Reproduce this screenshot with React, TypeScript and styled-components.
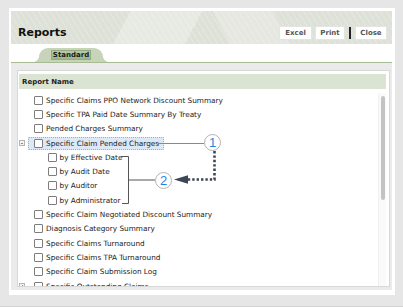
import React from 'react';
import styled, { createGlobalStyle } from 'styled-components';

const GlobalStyle = createGlobalStyle`
  html, body {
    margin: 0;
    padding: 0;
    background: #e6e6e6;
  }
  * {
    box-sizing: border-box;
  }
`;

const Frame = styled.div`
  position: relative;
  width: 403px;
  height: 307px;
  padding: 8px 8px 0 9px;
  background: #e6e6e6;
  border-bottom: 1px solid #d2d2d2;
  font-family: "DejaVu Sans", Verdana, sans-serif;
  overflow: hidden;
`;

const Card = styled.div`
  width: 386px;
  height: 287px;
  padding: 3px 3px 5px 2px;
  background: #fff;
  display: flex;
  flex-direction: column;
`;

const Header = styled.div`
  flex: 0 0 33px;
  display: flex;
  align-items: flex-end;
  justify-content: space-between;
  padding: 0 5px 4px 7px;
  background-color: #dee1d8;
  background-image:
    linear-gradient(118deg, rgba(255,255,255,0) 30%, rgba(255,255,255,0.28) 30%, rgba(255,255,255,0.28) 48%, rgba(255,255,255,0) 48%),
    linear-gradient(62deg, rgba(255,255,255,0) 55%, rgba(255,255,255,0.22) 55%, rgba(255,255,255,0.22) 70%, rgba(255,255,255,0) 70%),
    repeating-linear-gradient(58deg, rgba(255,255,255,0.2) 0 1px, transparent 1px 5px);
`;

const Title = styled.h1`
  margin: 0 0 1px 0;
  font-size: 11px;
  font-weight: bold;
  color: #111;
  line-height: 12px;
`;

const ButtonGroup = styled.div`
  display: flex;
  align-items: center;
  gap: 3px;
`;

const ToolButton = styled.button<{ $w: number }>`
  width: ${p => p.$w}px;
  height: 14px;
  padding: 0;
  border: 1px solid #e4e4e4;
  border-radius: 1px;
  background: #fff;
  font-family: "DejaVu Sans", Verdana, sans-serif;
  font-size: 7px;
  font-weight: bold;
  color: #555;
`;

const Divider = styled.span`
  width: 2px;
  height: 12px;
  margin: 0 1px;
  background: #222;
`;

const TabStrip = styled.div`
  flex: 0 0 19px;
  display: flex;
  align-items: flex-end;
  padding-left: 28px;
  border-bottom: 1px solid #a7bb95;
`;

const Tab = styled.div`
  position: relative;
  width: 64px;
  height: 14px;
  display: flex;
  justify-content: center;
  padding-top: 2px;
  background: #c7d4b9;
  border-radius: 9px 9px 0 0;

  &::before,
  &::after {
    content: '';
    position: absolute;
    bottom: 0;
    width: 7px;
    height: 7px;
  }
  &::before {
    left: -7px;
    background: radial-gradient(circle at 0 0, transparent 7px, #c7d4b9 7.5px);
  }
  &::after {
    right: -7px;
    background: radial-gradient(circle at 100% 0, transparent 7px, #c7d4b9 7.5px);
  }
`;

const TabButton = styled.div`
  width: 40px;
  height: 10px;
  display: flex;
  align-items: center;
  justify-content: center;
  background: linear-gradient(#b9cba8, #9db489);
  border: 1px solid #94aa80;
  font-size: 7px;
  font-weight: bold;
  color: #1b1b1b;
`;

const Content = styled.div`
  flex: 1 1 auto;
  min-height: 0;
  padding: 7px 2px 3px 6px;
  background: #ebebeb;
`;

const ListPanel = styled.div`
  height: 100%;
  display: flex;
  flex-direction: column;
  padding: 3px 3px 0 1px;
  background: #fff;
  border: 1px solid #d8d8d8;
`;

const ColumnHeader = styled.div`
  flex: 0 0 15px;
  display: flex;
  align-items: center;
  padding-left: 3px;
  background: #dbe4d2;
  font-size: 7px;
  font-weight: bold;
  color: #1e1e1e;
`;

const Body = styled.div`
  flex: 1 1 auto;
  min-height: 0;
  display: flex;
  margin-top: 4px;
  overflow: hidden;
`;

const List = styled.div`
  flex: 1;
`;

const Row = styled.div<{ $level: number }>`
  height: 14.3px;
  display: flex;
  align-items: center;
  padding-left: ${p => p.$level * 13.5}px;
`;

const ToggleSlot = styled.div`
  width: 9px;
  display: flex;
  align-items: center;
`;

const Toggle = styled.span`
  position: relative;
  width: 6px;
  height: 6px;
  border: 1px solid #b5b5b5;
  background: #f4f4f4;

  &::before {
    content: '';
    position: absolute;
    left: 1px;
    right: 1px;
    top: 1.5px;
    height: 1px;
    background: #8a8a8a;
  }
`;

const ToggleOpen = styled(Toggle)`
  &::after {
    content: '';
    position: absolute;
    top: 0.5px;
    bottom: 0.5px;
    left: 1.5px;
    width: 1px;
    background: #8a8a8a;
  }
`;

const Item = styled.div<{ $selected?: boolean }>`
  height: 13px;
  display: flex;
  align-items: center;
  padding: 0 4px 0 5px;
  border: 1px dotted ${p => (p.$selected ? '#8fb1dd' : 'transparent')};
  background: ${p => (p.$selected ? '#dde8f6' : 'transparent')};
  border-radius: 1px;
`;

const Check = styled.span`
  width: 9px;
  height: 9px;
  border: 1px solid #7d7d7d;
  border-radius: 1px;
  background: #fff;
  flex-shrink: 0;
`;

const Label = styled.span`
  margin-left: 3px;
  font-size: 7.3px;
  color: #222;
  white-space: nowrap;
`;

const ScrollTrack = styled.div`
  width: 8px;
  padding: 3px 1px 0 2px;
  border-left: 1px solid #f0f0f0;
  background: #fafafa;
`;

const Thumb = styled.div`
  height: 104px;
  border-radius: 3px;
  background: #c3c3c3;
`;

const Overlay = styled.svg`
  position: absolute;
  left: 0;
  top: 0;
  pointer-events: none;
`;

const Callout = styled.div<{ $x: number; $y: number }>`
  position: absolute;
  left: ${p => p.$x - 8.5}px;
  top: ${p => p.$y - 8.5}px;
  width: 17px;
  height: 17px;
  display: flex;
  align-items: center;
  justify-content: center;
  border: 1px solid #b4b4b4;
  border-radius: 50%;
  background: #fff;
  font-family: "Liberation Sans", Arial, sans-serif;
  font-size: 13px;
  color: #1f86e0;
`;

type Report = {
  label: string;
  level: number;
  toggle?: 'open' | 'closed';
  selected?: boolean;
};

const reports: Report[] = [
  { label: 'Specific Claims PPO Network Discount Summary', level: 0 },
  { label: 'Specific TPA Paid Date Summary By Treaty', level: 0 },
  { label: 'Pended Charges Summary', level: 0 },
  { label: 'Specific Claim Pended Charges', level: 0, toggle: 'open', selected: true },
  { label: 'by Effective Date', level: 1 },
  { label: 'by Audit Date', level: 1 },
  { label: 'by Auditor', level: 1 },
  { label: 'by Administrator', level: 1 },
  { label: 'Specific Claim Negotiated Discount Summary', level: 0 },
  { label: 'Diagnosis Category Summary', level: 0 },
  { label: 'Specific Claims Turnaround', level: 0 },
  { label: 'Specific Claims TPA Turnaround', level: 0 },
  { label: 'Specific Claim Submission Log', level: 0 },
  { label: 'Specific Outstanding Claims', level: 0, toggle: 'closed' },
];

const App: React.FC = () => {
  return (
    <Frame>
      <GlobalStyle />
      <Card>
        <Header>
          <Title>Reports</Title>
          <ButtonGroup>
            <ToolButton $w={33}>Excel</ToolButton>
            <ToolButton $w={30}>Print</ToolButton>
            <Divider />
            <ToolButton $w={32}>Close</ToolButton>
          </ButtonGroup>
        </Header>
        <TabStrip>
          <Tab>
            <TabButton>Standard</TabButton>
          </Tab>
        </TabStrip>
        <Content>
          <ListPanel>
            <ColumnHeader>Report Name</ColumnHeader>
            <Body>
              <List>
                {reports.map(r => (
                  <Row key={r.label} $level={r.level}>
                    <ToggleSlot>
                      {r.toggle === 'open' && <Toggle />}
                      {r.toggle === 'closed' && <ToggleOpen />}
                    </ToggleSlot>
                    <Item $selected={r.selected}>
                      <Check />
                      <Label>{r.label}</Label>
                    </Item>
                  </Row>
                ))}
              </List>
              <ScrollTrack>
                <Thumb />
              </ScrollTrack>
            </Body>
          </ListPanel>
        </Content>
      </Card>

      <Overlay width={403} height={307} viewBox="0 0 403 307">
        <line x1={158} y1={143.5} x2={204} y2={143.5} stroke="#8a8a8a" strokeWidth={1} />
        <path d="M121 156.5 H128.5 V203.5 H122 M128.5 180 H155" fill="none" stroke="#555" strokeWidth={1} />
        <path d="M214.5 151 V179.5 H188" fill="none" stroke="#3c4656" strokeWidth={2.6} strokeDasharray="2.4 2" />
        <polygon points="174,179.5 188,175.3 188,183.7" fill="#3c4656" />
      </Overlay>
      <Callout $x={212.7} $y={142.5}>1</Callout>
      <Callout $x={163.5} $y={180}>2</Callout>
    </Frame>
  );
};

export default App;
